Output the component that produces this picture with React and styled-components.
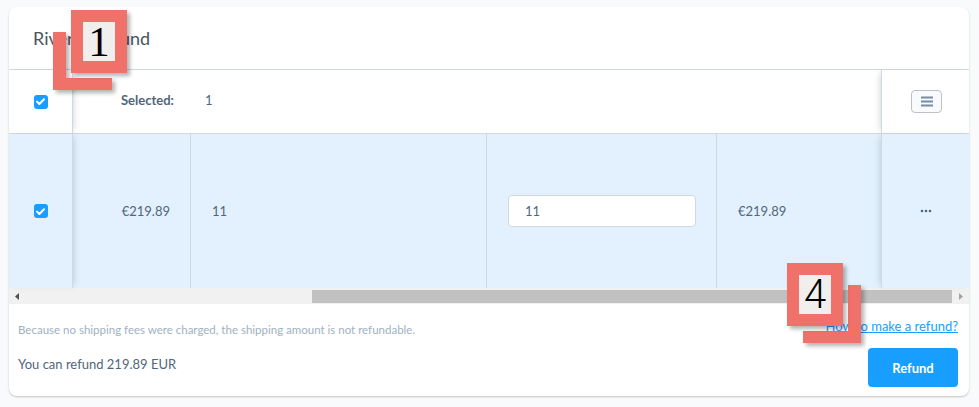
import React from 'react';
import styled, { createGlobalStyle } from 'styled-components';

const GlobalStyle = createGlobalStyle`
  html, body {
    margin: 0;
    padding: 0;
    background: #f9fafb;
    font-family: 'Source Sans Pro', Lato, 'Noto Sans', sans-serif;
    color: #52667a;
  }
  * { box-sizing: border-box; }
`

const Page = styled.div`
  position: relative;
  width: 979px;
  height: 407px;
  padding: 7px 10px 0 9px;
`

const Card = styled.div`
  width: 960px;
  height: 389px;
  background: #fff;
  border-radius: 8px;
  box-shadow: 0 1px 2px rgba(0, 0, 0, 0.22);
  overflow: hidden;
  display: flex;
  flex-direction: column;
`

const CardHeader = styled.div`
  height: 63px;
  display: flex;
  align-items: center;
  padding: 0 24px;
  border-bottom: 1px solid #d1d9e0;
`

const Title = styled.h2`
  margin: 0;
  font-size: 18px;
  font-weight: 400;
  color: #4a5561;
`

const Row = styled.div`
  display: grid;
  grid-template-columns: 64px 118px 296px 230px 164px 88px;
  height: ${props => props.$height}px;
  background: ${props => props.$selected ? '#e2f1fd' : '#fff'};
  border-bottom: ${props => props.$divided ? '1px solid #d1d9e0' : 'none'};
`

const Cell = styled.div`
  display: flex;
  align-items: center;
  justify-content: ${props => props.$align || 'flex-start'};
  padding: 0 20px 0 21px;
  font-size: 13px;
  color: #52667a;
  border-right: ${props => props.$line ? '1px solid #d1d9e0' : 'none'};
`

const StickyCell = styled.div`
  position: relative;
  z-index: 1;
  display: flex;
  align-items: center;
  justify-content: center;
  background: inherit;
  border-${props => props.$side === 'left' ? 'right' : 'left'}: 1px solid #d1d9e0;
  box-shadow: ${props => props.$side === 'left'
    ? '4px 0 6px -3px rgba(80, 100, 120, 0.25)'
    : '-4px 0 6px -3px rgba(80, 100, 120, 0.25)'};
`

const CheckBox = styled.span`
  width: 14px;
  height: 14px;
  border-radius: 3px;
  background: #189eff;
  display: flex;
  align-items: center;
  justify-content: center;
`

const SelectionInfo = styled.div`
  grid-column: 2 / 6;
  display: flex;
  align-items: center;
  padding: 0 0 3px 48px;
  font-size: 13px;
  color: #52667a;
  strong {
    font-weight: 700;
    margin-right: 31px;
  }
`

const MenuButton = styled.button`
  width: 31px;
  height: 23px;
  margin-left: 2px;
  border: 1px solid #bcc1c7;
  border-radius: 4px;
  background: #f9fafb;
  display: flex;
  align-items: center;
  justify-content: center;
  padding: 0;
`

const QtyInput = styled.div`
  width: 100%;
  height: 32px;
  background: #fff;
  border: 1px solid #d1d9e0;
  border-radius: 4px;
  display: flex;
  align-items: center;
  padding-left: 16px;
  font-size: 13px;
  color: #52667a;
`

const ScrollBar = styled.div`
  height: 16px;
  display: flex;
  background: #f1f1f1;
`

const ScrollArrow = styled.div`
  width: 16px;
  display: flex;
  align-items: center;
  justify-content: center;
`

const ScrollTrack = styled.div`
  flex: 1;
  display: flex;
  justify-content: flex-end;
  align-items: center;
  padding-right: 1px;
`

const ScrollThumb = styled.div`
  width: ${props => props.$width}px;
  height: 13px;
  background: #c1c1c1;
`

const Footer = styled.div`
  flex: 1;
  padding: 14px 11px 9px 9px;
  display: flex;
  flex-direction: column;
`

const FooterRow = styled.div`
  display: flex;
  justify-content: space-between;
  align-items: flex-start;
  margin-top: ${props => props.$gap || 0}px;
`

const Note = styled.p`
  margin: 5px 0 0;
  font-size: 11.5px;
  line-height: 14px;
  color: #a0b1c2;
`

const HelpLink = styled.a`
  font-size: 13px;
  line-height: 16px;
  color: #189eff;
  text-decoration: underline;
`

const Amount = styled.p`
  margin: 7px 0 0;
  font-size: 13px;
  line-height: 18px;
  color: #52667a;
`

const RefundButton = styled.button`
  width: 90px;
  height: 39px;
  border: none;
  border-radius: 4px;
  background: #189eff;
  color: #fff;
  font-family: inherit;
  font-size: 13px;
  font-weight: 700;
`

const MarkerBox = styled.div`
  position: absolute;
  z-index: 5;
  left: ${props => props.$x}px;
  top: ${props => props.$y}px;
  width: 56px;
  height: 63px;
  border: 12px solid #ef716a;
  background: #f0efed;
  box-shadow: 3px 3px 4px rgba(0, 0, 0, 0.3);
  display: flex;
  align-items: center;
  justify-content: center;
  color: #000;
  font-family: ${props => props.$serif ? "'Liberation Serif', serif" : "Roboto, 'Liberation Sans', sans-serif"};
  font-weight: ${props => props.$serif ? 400 : 300};
  font-size: ${props => props.$serif ? 43 : 40}px;
  line-height: 1;
`

const MarkerCorner = styled.div`
  position: absolute;
  z-index: 4;
  left: ${props => props.$x}px;
  top: ${props => props.$y}px;
  width: ${props => props.$w}px;
  height: ${props => props.$h}px;
  border-bottom: 12px solid #ef716a;
  border-${props => props.$side}: 13px solid #ef716a;
  filter: drop-shadow(3px 3px 2px rgba(0, 0, 0, 0.3));
`

const Check = () => (
  <svg width="9" height="7" viewBox="0 0 9 7">
    <path d="M1 3.6 L3.4 6 L8 1.2" fill="none" stroke="#fff" strokeWidth="2" strokeLinecap="round" strokeLinejoin="round" />
  </svg>
)

const Triangle = ({ dir }) => (
  <svg width="4" height="7" viewBox="0 0 4 7">
    <path d={dir === 'left' ? 'M4 0 L0 3.5 L4 7 Z' : 'M0 0 L4 3.5 L0 7 Z'} fill={dir === 'left' ? '#505050' : '#a3a3a3'} />
  </svg>
)

const App = () => (
  <>
    <GlobalStyle />
    <Page>
      <Card>
        <CardHeader>
          <Title>Riverty Refund</Title>
        </CardHeader>

        <Row $height={64} $divided>
          <StickyCell $side="left"><CheckBox><Check /></CheckBox></StickyCell>
          <SelectionInfo><strong>Selected:</strong>1</SelectionInfo>
          <StickyCell $side="right">
            <MenuButton>
              <svg width="12" height="11" viewBox="0 0 12 11">
                <path d="M0 1.5 H12 M0 5.5 H12 M0 9.5 H12" stroke="#758ca3" strokeWidth="2" />
              </svg>
            </MenuButton>
          </StickyCell>
        </Row>

        <Row $height={154} $selected>
          <StickyCell $side="left"><CheckBox><Check /></CheckBox></StickyCell>
          <Cell $line $align="flex-end">€219.89</Cell>
          <Cell $line>11</Cell>
          <Cell $line><QtyInput>11</QtyInput></Cell>
          <Cell>€219.89</Cell>
          <StickyCell $side="right">
            <svg width="12" height="4" viewBox="0 0 12 4">
              <circle cx="2" cy="2" r="1.3" fill="#52667a" />
              <circle cx="6" cy="2" r="1.3" fill="#52667a" />
              <circle cx="10" cy="2" r="1.3" fill="#52667a" />
            </svg>
          </StickyCell>
        </Row>

        <ScrollBar>
          <ScrollArrow><Triangle dir="left" /></ScrollArrow>
          <ScrollTrack><ScrollThumb $width={640} /></ScrollTrack>
          <ScrollArrow><Triangle dir="right" /></ScrollArrow>
        </ScrollBar>

        <Footer>
          <FooterRow>
            <Note>Because no shipping fees were charged, the shipping amount is not refundable.</Note>
            <HelpLink href="#">How to make a refund?</HelpLink>
          </FooterRow>
          <FooterRow $gap={11}>
            <Amount>You can refund 219.89 EUR</Amount>
            <RefundButton>Refund</RefundButton>
          </FooterRow>
        </Footer>
      </Card>

      <MarkerCorner $x={53} $y={32} $w={59} $h={58} $side="left" />
      <MarkerBox $x={71} $y={10} $serif>1</MarkerBox>

      <MarkerCorner $x={803} $y={285} $w={58} $h={58} $side="right" />
      <MarkerBox $x={787} $y={263}>4</MarkerBox>
    </Page>
  </>
)

export default App
